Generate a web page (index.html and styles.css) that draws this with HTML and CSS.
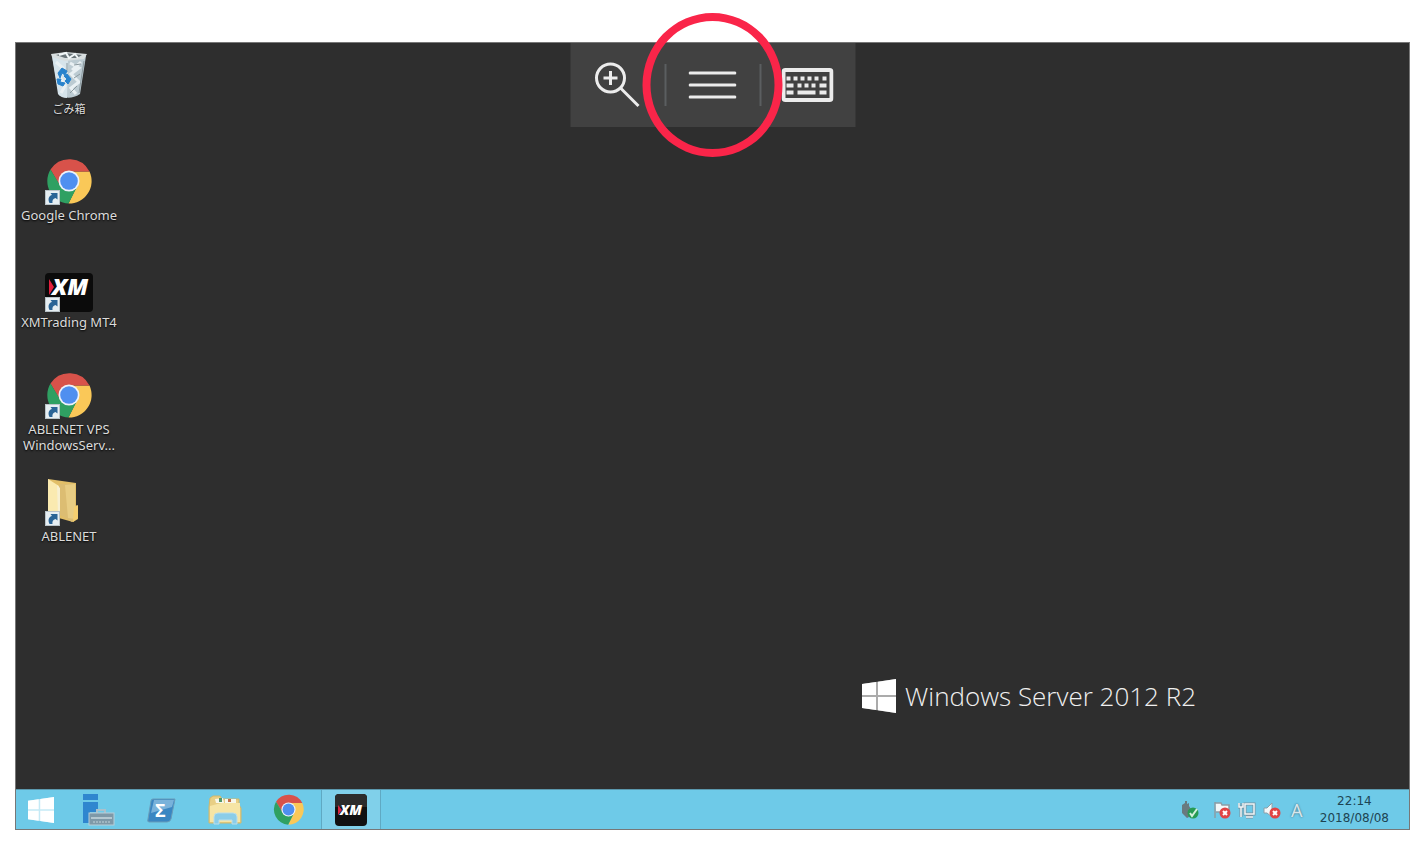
FILE: index.html
```
<!DOCTYPE html>
<html lang="ja">
<head>
  <meta charset="UTF-8">
  <meta name="viewport" content="width=device-width, initial-scale=1">
  <title>Windows Server 2012 R2</title>
  <link rel="stylesheet" href="styles.css">
</head>
<body>

  <!-- shared icons -->
  <svg class="sprite" aria-hidden="true">
    <symbol id="chrome" viewBox="0 0 46 46">
      <path d="M43.500 13.500A22.500 22.500 0 0 1 22.500 45.500L31 28L24 13.500z" fill="#fac858"/>
      <path d="M4.500 11.500A22.500 22.500 0 0 1 43.500 13.500H23L14 28z" fill="#d8524a"/>
      <path d="M4.500 11.500A22.500 22.500 0 0 0 22.500 45.500L31.500 28L23 33L14.500 28z" fill="#2fa062"/>
      <circle cx="23" cy="23" r="10.500" fill="#eef2fa"/>
      <circle cx="23" cy="23" r="8.800" fill="#4f8ff0"/>
    </symbol>
    <symbol id="shortcut" viewBox="0 0 15 15">
      <rect x=".5" y=".5" width="14" height="14" fill="#e6eef2" stroke="#b9c3c8"/>
      <path d="M4.500 13C2.500 9 4 5.500 7 5L5.500 3H12.500V9.500L10.500 8C8 8.500 7 10.500 7.500 13z" fill="#2a6496"/>
    </symbol>
    <symbol id="winlogo" viewBox="0 0 34 34">
      <path d="M0 5L34 0V34L0 29z" opacity=".6"/>
      <path d="M0 5L14 3V16H0zM16 2.700L34 0V16H16zM0 18H14V31L0 29zM16 18H34V34L16 31.300z"/>
    </symbol>
  </svg>

  <div class="screen">
    <main class="desktop">
      <nav class="shortcuts" aria-label="デスクトップ">
        <button class="shortcut">
          <svg viewBox="0 0 48 48">
            <path d="M7 5L41 5L35 43Q24 50 14 44z" fill="#bccbd2"/>
            <path d="M7 5L23 9L22 47Q16 47 13 43z" fill="#d6e4eb"/>
            <path d="M6 3L21 1L42 3L39 8L20 10L7 6z" fill="#d8dedf"/>
            <path d="M11 4L20 2L37 4L32 7L20 7z" fill="#697478"/>
            <path d="M14 4L21 2L24 7L30 3L33 7" fill="none" stroke="#f2f7f8" stroke-width="2"/>
            <path d="M11 11L18 17L15 26L20 35L16 42M25 12L34 17L26 23L34 31L26 37L31 43M36 11L27 19" fill="none" stroke="#e9f0f3" stroke-width="3"/>
            <path d="M39 10L34 42M29 14L36 13M29 27L35 23M22 12V21M25 42L32 35" fill="none" stroke="#8b999f" stroke-width="1"/>
            <path d="M13 22L17 17L22 20L20 24L17 22L15 27zM22 23L26 28L23 33L20 30L22 28L19 25zM12 28L16 28L15 31L20 32L18 35L13 33z" fill="#2782cc" stroke="#2782cc"/>
          </svg>
          <span class="kana">ごみ箱</span>
        </button>
        <button class="shortcut">
          <svg viewBox="0 0 48 48">
            <use href="#chrome" x="1" y="0" width="46" height="46"/>
            <use href="#shortcut" x="0" y="32" width="15" height="15"/>
          </svg>
          <span>Google Chrome</span>
        </button>
        <button class="shortcut">
          <svg viewBox="0 0 48 48">
            <rect x="0" y="8" width="48" height="39" rx="4" fill="#0b0b0b"/>
            <path d="M4 14L9 22L4 30z" fill="#e4203f"/>
            <text class="xm" x="7" y="30" font-size="23">XM</text>
            <use href="#shortcut" x="0" y="32" width="15" height="15"/>
          </svg>
          <span>XMTrading MT4</span>
        </button>
        <button class="shortcut">
          <svg viewBox="0 0 48 48">
            <use href="#chrome" x="1" y="0" width="46" height="46"/>
            <use href="#shortcut" x="0" y="32" width="15" height="15"/>
          </svg>
          <span>ABLENET VPS<br>WindowsServ...</span>
        </button>
        <button class="shortcut">
          <svg viewBox="0 0 48 48">
            <path d="M3 0L31 4V26L33 28V40L28 43L3 36z" fill="#e2bf68"/>
            <path d="M14 5L30 5V40L27 43L14 35z" fill="#dcbd72"/>
            <path d="M20 6L30 5V40L23 39z" fill="#e8cd84"/>
            <path d="M3 0L14 7V39L3 35z" fill="#faeab0"/>
            <path d="M12 6L15 9V32L13 36z" fill="#f7f0d2"/>
            <path d="M29 28L33 26V39L28 43z" fill="#f5cf70"/>
            <use href="#shortcut" x="0" y="32" width="15" height="15"/>
          </svg>
          <span>ABLENET</span>
        </button>
      </nav>

      <div class="brand">
        <svg><use href="#winlogo"/></svg>
        <span>Windows Server 2012 R2</span>
      </div>

      <div class="toolbar">
        <button aria-label="ズーム">
          <svg width="46" height="46" viewBox="0 0 46 46" fill="none" stroke="#ececec" stroke-width="3">
            <circle cx="16" cy="16" r="14"/>
            <path d="M16 9V23M9 16H23M26 26L44 44"/>
          </svg>
        </button>
        <button aria-label="メニュー">
          <svg width="48" height="28" viewBox="0 0 48 28" stroke="#ececec" stroke-width="3" stroke-linecap="round">
            <path d="M1.500 2H46.500M1.500 14H46.500M1.500 26H46.500"/>
          </svg>
        </button>
        <button aria-label="キーボード">
          <svg width="52" height="34" viewBox="0 0 52 34" fill="none" stroke="#ececec">
            <rect x="2" y="2" width="48" height="30" rx="2" stroke-width="4"/>
            <path d="M5 10.500H9M12 10.500H16M19 10.500H23M26 10.500H30M33 10.500H37M41 10.500H45M5 17.500H12M16 17.500H20M23 17.500H27M30 17.500H34M38 17.500H45M5 24.500H12M16 24.500H34M38 24.500H45" stroke-width="4"/>
          </svg>
        </button>
        <div class="ring"></div>
      </div>
    </main>

    <footer class="taskbar">
      <button class="start" aria-label="スタート">
        <svg width="28" height="26"><use href="#winlogo"/></svg>
      </button>
      <button class="task" aria-label="サーバー マネージャー">
        <svg width="32" height="32" viewBox="0 0 32 32">
          <path d="M0 0H15V6H0zM0 8H15V18H7V29H0z" fill="#2f86cf"/>
          <path d="M14 19V16H22V19" fill="none" stroke="#a9c1cc" stroke-width="2"/>
          <rect x="6" y="19" width="25" height="12" fill="#7e99a8" stroke="#b7ced8"/>
          <path d="M8 24H29" stroke="#b4c8d1" stroke-width="2"/>
          <path d="M10 28H28" stroke="#9fb6c1" stroke-width="2" stroke-dasharray="2 1"/>
        </svg>
      </button>
      <button class="task" aria-label="Windows PowerShell">
        <svg width="30" height="26" viewBox="0 0 30 26">
          <path d="M6 2H28L24 22Q23 25 20 25H2Q0 25 1 22L4 4Q4 2 6 2z" fill="#3a86c2" stroke="#699dba"/>
          <path d="M7 3H27L25 10L4 16z" fill="#79b2da"/>
          <text x="8" y="20" font-size="18" class="sigma">Σ</text>
        </svg>
      </button>
      <button class="task" aria-label="エクスプローラー">
        <svg width="34" height="30" viewBox="0 0 34 30">
          <path d="M2 3L5 1H12L14 4H31V10L33 13V28H1V12z" fill="#e8cf84" stroke="#d0b86c"/>
          <path d="M7 4L15 3L16 8H8zM17 4H28V9H17z" fill="#f7f7ea"/>
          <path d="M11 3H14V7H11z" fill="#52966a"/>
          <path d="M20 4H23V7H20z" fill="#c36d45"/>
          <path d="M2 11L13 8H32V27H2z" fill="#f6e5a5"/>
          <path d="M6 29V22Q6 18 10 18H25Q29 18 29 22V29H24V25H11V29z" fill="#8bcde9" stroke="#b9deeb"/>
        </svg>
      </button>
      <button class="task" aria-label="Google Chrome">
        <svg width="31" height="31"><use href="#chrome"/></svg>
      </button>
      <button class="task active" aria-label="XMTrading MT4">
        <svg width="34" height="34" viewBox="0 0 34 34">
          <rect x="1" y="1" width="32" height="32" rx="4" fill="#111"/>
          <path d="M1 5Q1 1 5 1H29Q33 1 33 5V14H1z" fill="#2c2c2c"/>
          <path d="M4 12L8 17L4 22z" fill="#d92742"/>
          <text class="xm" x="6" y="22" font-size="14">XM</text>
        </svg>
      </button>

      <div class="tray">
        <svg class="usb" viewBox="0 0 18 18">
          <path d="M1 4L4 2V0H6V3L8 2V5L10 8V15L6 17L1 12z" fill="#697a80"/>
          <circle cx="12" cy="12" r="5.500" fill="#279b55"/>
          <path d="M9 12L11 15L16 8" fill="none" stroke="#d5f0dc" stroke-width="2"/>
        </svg>
        <svg viewBox="0 0 18 18">
          <path d="M2 1V17M2 2H8L9 4H16V11H3" fill="#f3f7f8" stroke="#8b9da5" stroke-width="1.500"/>
          <circle cx="12" cy="12" r="5.500" fill="#e04545"/>
          <path d="M10 10L14 14M14 10L10 14" stroke="#fff" stroke-width="2"/>
        </svg>
        <svg viewBox="0 0 18 18" fill="none" stroke="#f0f6f8">
          <path d="M1 2V6H5V2M3 6V16M7 3H16V13H7zM8 16H15" stroke="#7892a0" stroke-width="3"/>
          <path d="M1 2V6H5V2M3 6V16M7 3H16V13H7zM8 16H15" stroke-width="1.500"/>
        </svg>
        <svg viewBox="0 0 18 18">
          <path d="M1 7H4L9 2V16L4 12H1z" fill="#f5f8f9" stroke="#8ba0aa"/>
          <circle cx="12" cy="12" r="5.500" fill="#e04545"/>
          <path d="M10 10L14 14M14 10L10 14" stroke="#fff" stroke-width="2"/>
        </svg>
        <span class="ime">A</span>
        <time class="clock" datetime="2018-08-08T22:14">22:14<br>2018/08/08</time>
      </div>
    </footer>
  </div>

</body>
</html>
```
FILE: styles.css
```
* { box-sizing: border-box; }

body {
  margin: 0;
  min-height: 100vh;
  padding: 42px 12px 14px 15px;
  display: flex;
  background: #fff;
  font-family: "Noto Sans", "Noto Sans CJK JP", sans-serif;
}
button {
  margin: 0; padding: 0;
  border: none; background: none;
  color: inherit; font: inherit;
  cursor: pointer;
}
svg { display: block; flex-shrink: 0; }
.sprite { position: absolute; width: 0; height: 0; }

.screen {
  flex: 1;
  display: flex; flex-direction: column;
  border: 1px solid #777;
}

.desktop {
  position: relative;
  flex: 1;
  display: flex; justify-content: space-between;
  background: #2e2e2e;
}

.shortcuts {
  display: grid;
  grid-auto-rows: 107px;
  align-content: start;
  width: 106px;
  padding-top: 8px;
}
.shortcut {
  display: flex; flex-direction: column;
  align-items: center; gap: 1px;
  color: #dcdcdc;
  font-size: 13px; line-height: 16px;
  white-space: nowrap;
}
.shortcut svg { width: 48px; height: 48px; }
.shortcut span { text-shadow: 0 1px 2px #000; }
.shortcut .kana { font-size: 11px; line-height: 18px; }
.xm {
  font-family: "Open Sans", sans-serif;
  font-weight: 800; font-style: italic;
  fill: #fff;
}

.brand {
  align-self: flex-end;
  display: flex; align-items: center; gap: 9px;
  margin: 0 213px 76px 0;
  color: #f0f0f0; fill: #fff;
  font: 300 26px/34px "Open Sans", sans-serif;
}
.brand svg { width: 34px; height: 34px; }

.toolbar {
  position: absolute;
  top: 0; left: 50%;
  transform: translateX(-50%);
  display: flex;
  height: 84px;
  background: #414141;
}
.toolbar button {
  display: flex; align-items: center; justify-content: center;
  width: 95px;
}
.toolbar button + button::before {
  content: "";
  position: absolute;
  width: 2px; height: 42px;
  margin-right: 95px;
  background: #5b5e60;
}
.ring {
  position: absolute;
  top: 50%; left: 50%;
  width: 140px; height: 144px;
  transform: translate(-50%, -50%);
  border: 8px solid #fa2549;
  border-radius: 50%;
  pointer-events: none;
}

.taskbar {
  display: flex; align-items: stretch; gap: 3px;
  height: 40px;
  background: #6ecae8;
  border-top: 1px solid #5b98ad;
}
.start, .task {
  display: flex; align-items: center; justify-content: center;
}
.start { width: 50px; fill: #fff; }
.task { width: 60px; }
.task.active {
  background: #80d0ea;
  border: solid #5fa9c3;
  border-width: 0 1px;
}
.sigma {
  font-family: "Open Sans", sans-serif;
  font-weight: 700;
  fill: #fff;
}
.task svg { overflow: visible; }

.tray {
  display: flex; align-items: center; gap: 7px;
  margin-left: auto;
  padding-right: 20px;
}
.tray svg { width: 18px; height: 18px; }
.tray .usb { margin-right: 7px; }
.ime {
  width: 18px;
  text-align: center;
  color: #d7e6ec;
  font-size: 18px; line-height: 20px;
  text-shadow: 0 0 2px #38596a;
}
.clock {
  margin-left: 7px;
  text-align: center;
  color: #1d4452;
  font: 12px/17px "DejaVu Sans", sans-serif;
}
```
